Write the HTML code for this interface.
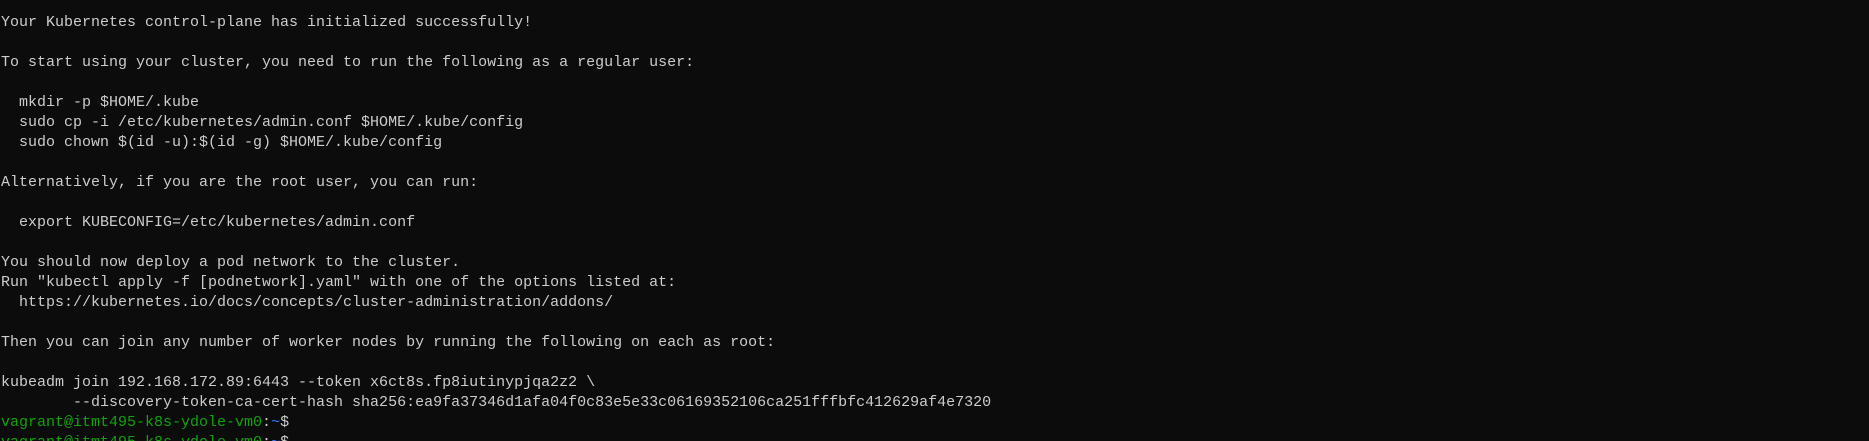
<!DOCTYPE html>
<html><head><style>
html,body{margin:0;padding:0;background:#0c0c0c;width:1869px;height:441px;overflow:hidden}
pre{margin:0;padding:13px 0 0 1px;font-family:"Liberation Mono",monospace;font-size:15px;line-height:20px;color:#cccccc;letter-spacing:0}
.g{color:#13a10e}.b{color:#3b78ff}
</style></head><body><pre>Your Kubernetes control-plane has initialized successfully!

To start using your cluster, you need to run the following as a regular user:

  mkdir -p $HOME/.kube
  sudo cp -i /etc/kubernetes/admin.conf $HOME/.kube/config
  sudo chown $(id -u):$(id -g) $HOME/.kube/config

Alternatively, if you are the root user, you can run:

  export KUBECONFIG=/etc/kubernetes/admin.conf

You should now deploy a pod network to the cluster.
Run "kubectl apply -f [podnetwork].yaml" with one of the options listed at:
  https://kubernetes.io/docs/concepts/cluster-administration/addons/

Then you can join any number of worker nodes by running the following on each as root:

kubeadm join 192.168.172.89:6443 --token x6ct8s.fp8iutinypjqa2z2 \
        --discovery-token-ca-cert-hash sha256:ea9fa37346d1afa04f0c83e5e33c06169352106ca251fffbfc412629af4e7320
<span class="g">vagrant@itmt495-k8s-ydole-vm0</span>:<span class="b">~</span>$
<span class="g">vagrant@itmt495-k8s-ydole-vm0</span>:<span class="b">~</span>$
</pre></body></html>
